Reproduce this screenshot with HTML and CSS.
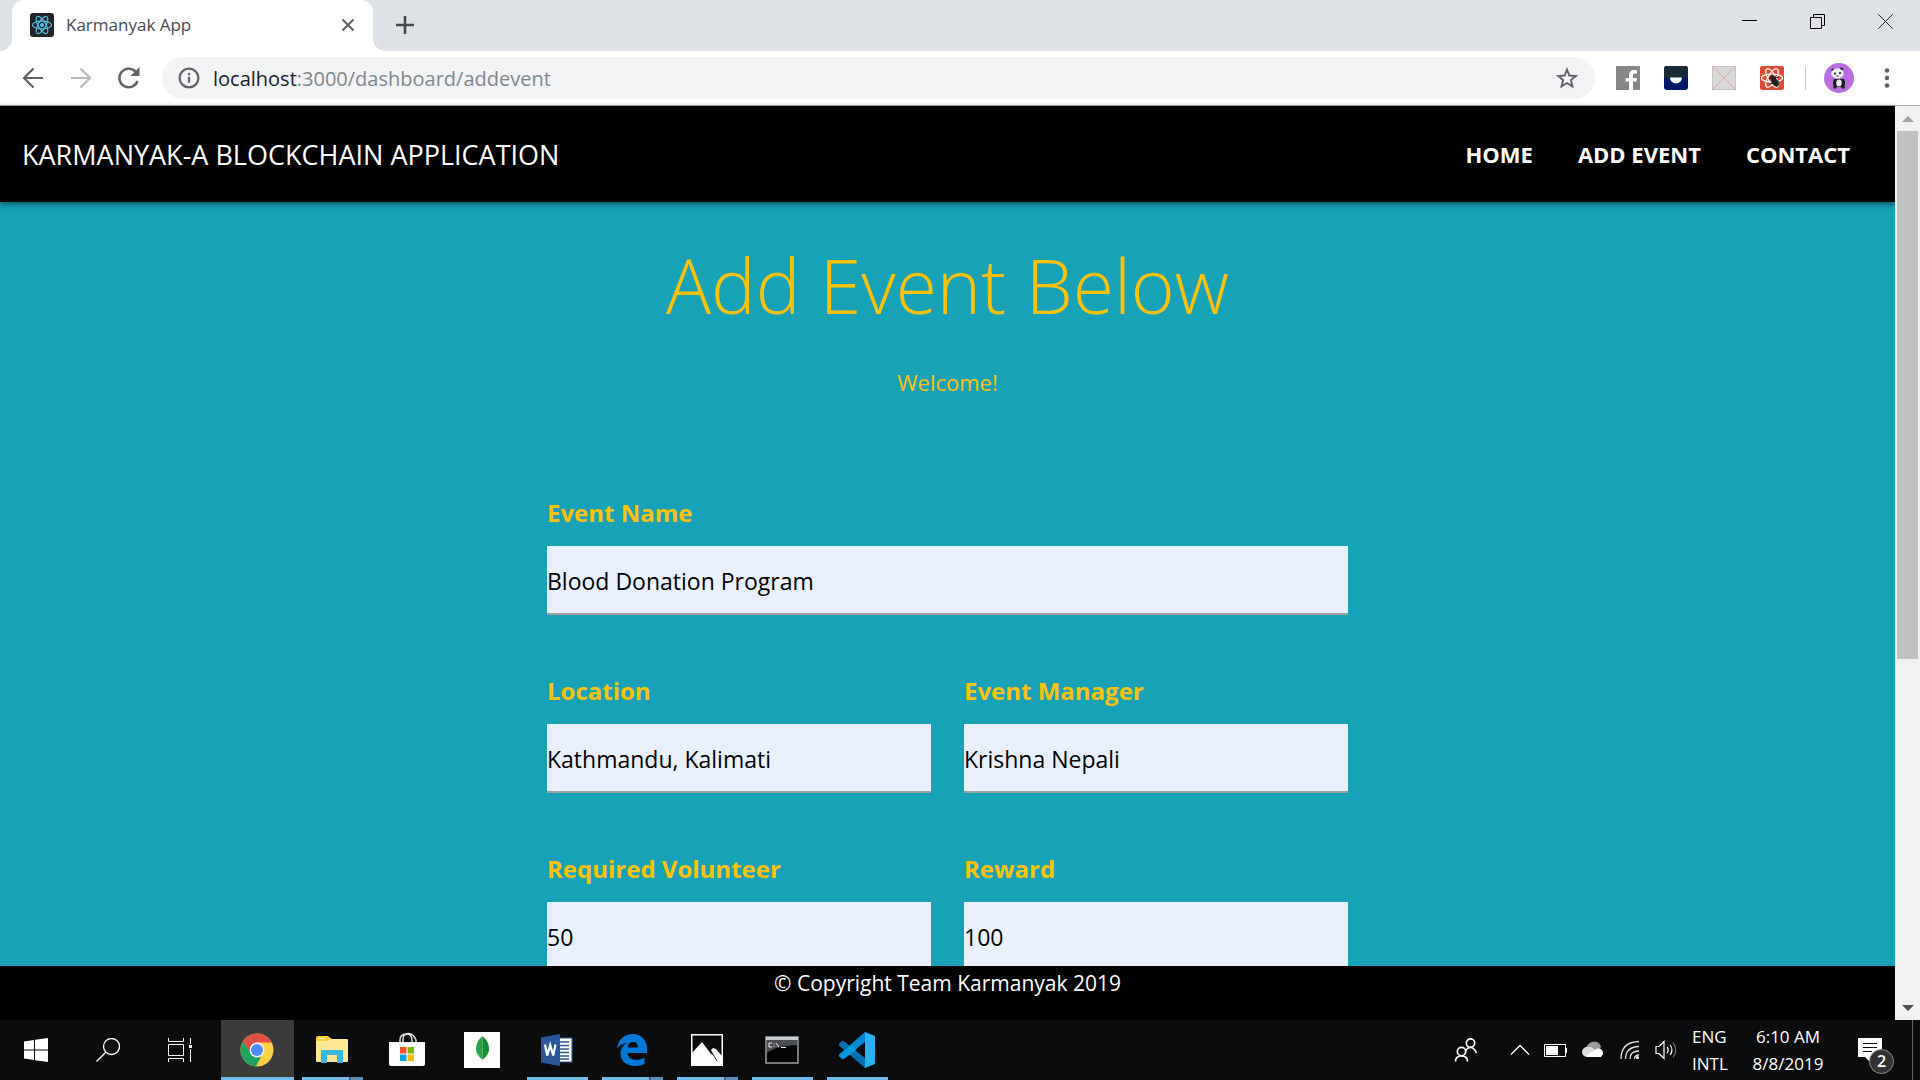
FILE: index.html
```html
<!DOCTYPE html>
<html lang="en">
<head>
<meta charset="utf-8">
<title>Karmanyak App</title>
<link rel="stylesheet" href="styles.css">
</head>
<body>
<div class="desktop">
  <div class="tabstrip">
    <div class="tab">
      <svg class="favicon" width="24" height="24" viewBox="0 0 24 24" fill="none" stroke="#53c1de" stroke-width="1.2"><rect width="24" height="24" rx="3" fill="#20232a" stroke="none"/><g><ellipse cx="12" cy="12" rx="9.6" ry="3.8"/><ellipse cx="12" cy="12" rx="9.6" ry="3.8" transform="rotate(60 12 12)"/><ellipse cx="12" cy="12" rx="9.6" ry="3.8" transform="rotate(120 12 12)"/></g><circle cx="12" cy="12" r="2" fill="#53c1de" stroke="none"/></svg>
      <span class="tab-title">Karmanyak App</span>
      <button class="plain" aria-label="Close tab"><svg width="14" height="14" viewBox="0 0 14 14" stroke="#5f6368" stroke-width="2"><path d="M1.5 1.5l11 11M12.500 1.500l-11 11"/></svg></button>
    </div>
    <button class="plain new-tab" aria-label="New tab"><svg width="18" height="18" viewBox="0 0 18 18" stroke="#45494d" stroke-width="2.600"><path d="M9 0v18M0 9h18"/></svg></button>
    <div class="window-controls">
      <button class="plain" aria-label="Minimize"><svg width="15" height="15" viewBox="0 0 15 15"><path d="M0 6h15v1H0z"/></svg></button>
      <button class="plain" aria-label="Restore"><svg width="15" height="15" viewBox="0 0 15 15" fill="none" stroke="#000"><path d="M.5 3.500h11v11H.5zM3.500 3.500v-3h11v11h-3"/></svg></button>
      <button class="plain" aria-label="Close"><svg width="15" height="15" viewBox="0 0 15 15" fill="none" stroke="#222"><path d="M.3.3l14.400 14.400M14.700.3L.3 14.700"/></svg></button>
    </div>
  </div>

  <div class="toolbar">
    <div class="nav-buttons">
      <button class="plain" aria-label="Back"><svg width="24" height="24" viewBox="0 0 24 24" fill="none" stroke="#5f6368" stroke-width="2.200"><path d="M22 12H4M12.500 2.500L3 12l9.500 9.500"/></svg></button>
      <button class="plain" aria-label="Forward"><svg width="24" height="24" viewBox="0 0 24 24" fill="none" stroke="#bababa" stroke-width="2.200"><path d="M2 12h18M11.500 2.500L21 12l-9.500 9.500"/></svg></button>
      <button class="plain" aria-label="Reload"><svg width="24" height="24" viewBox="0 0 24 24" fill="none" stroke="#5f6368" stroke-width="2.400"><path d="M20.500 15A9.300 9.300 0 1 1 18.500 5.600"/><path d="M22.500 1v9h-9z" fill="#5f6368" stroke="none"/></svg></button>
    </div>
    <div class="omnibox">
      <svg width="22" height="22" viewBox="0 0 22 22" fill="none" stroke="#5f6368" stroke-width="2.200"><circle cx="11" cy="11" r="9.400"/><path d="M11 9.800v6M11 6v2.200"/></svg>
      <span class="url"><b class="host">localhost</b>:3000/dashboard/addevent</span>
      <button class="plain" aria-label="Bookmark"><svg width="22" height="22" viewBox="0 0 22 22" fill="none" stroke="#5f6368" stroke-width="1.900"><path d="M11 2.600l2.400 5.900 6.400.5-4.900 4.100 1.600 6.300-5.500-3.400-5.500 3.400 1.600-6.300L2.200 9l6.400-.5z"/></svg></button>
    </div>
    <div class="extensions">
      <button class="plain" aria-label="Facebook"><svg width="24" height="24" viewBox="0 0 24 24"><path d="M0 0h24v24H0z" fill="#868686"/><path d="M13 24v-8.500h-3.500v-3.600H13V9.500C13 5.900 15.200 4 18.200 4H21v3.500h-2c-1.600 0-2 .8-2 2v2.400h4l-.6 3.600H17V24z" fill="#fff"/></svg></button>
      <button class="plain" aria-label="Reader"><svg width="24" height="24" viewBox="0 0 24 24"><rect width="24" height="24" rx="3" fill="#001a6b"/><path d="M3 0h18a3 3 0 0 1 3 3v9H0V3a3 3 0 0 1 3-3z" fill="#172a38"/><path d="M6 11.500h12a6 6 0 0 1-12 0z" fill="#fff"/></svg></button>
      <button class="plain" aria-label="Disabled extension"><svg width="24" height="24" viewBox="0 0 24 24" fill="none"><path d="M.5.5h23v23H.5z" fill="#d8d8d8" stroke="#c4c4c4"/><path d="M0 0l24 24M24 0L0 24" stroke="#eaa9a5"/></svg></button>
      <button class="plain" aria-label="React tools"><svg width="24" height="24" viewBox="0 0 24 24" fill="none" stroke="#fff" stroke-width="1.200"><rect width="24" height="24" rx="2" fill="#dd4b39" stroke="none"/><ellipse cx="12" cy="12" rx="10.500" ry="4"/><ellipse cx="12" cy="12" rx="10.500" ry="4" transform="rotate(60 12 12)"/><ellipse cx="12" cy="12" rx="10.500" ry="4" transform="rotate(120 12 12)"/><path d="M9 13l10-2M10 18l9-3M12 9l5 12M15 10l2 9" stroke="#222"/><ellipse cx="15" cy="16" rx="3" ry="5" transform="rotate(-40 15 16)" fill="#222" stroke="none"/><circle cx="12" cy="11.500" r="2" fill="#222" stroke="none"/></svg></button>
    </div>
    <span class="divider"></span>
    <button class="plain avatar" aria-label="Profile"><svg width="30" height="30" viewBox="0 0 30 30"><circle cx="15" cy="15" r="15" fill="#b86ee0"/><path d="M10 16q-2 4 0 8h10q2-4 0-8z" fill="#1c1a20"/><ellipse cx="15" cy="20" rx="2.800" ry="3.500" fill="#e8e8ee"/><circle cx="9" cy="7" r="1.600" fill="#222"/><circle cx="17.500" cy="6" r="1.600" fill="#222"/><ellipse cx="13.500" cy="10.500" rx="6.200" ry="5" fill="#efeef2"/><circle cx="11" cy="10.500" r="1.100" fill="#222"/><circle cx="16" cy="10" r="1.100" fill="#222"/><path d="M12.500 13h2" stroke="#222"/><circle cx="11" cy="24" r="1.800" fill="#222"/><circle cx="19" cy="24" r="1.800" fill="#222"/></svg></button>
    <button class="plain" aria-label="Menu"><svg width="6" height="20" viewBox="0 0 6 20" fill="#5f6368"><circle cx="3" cy="2.500" r="2.300"/><circle cx="3" cy="10" r="2.300"/><circle cx="3" cy="17.500" r="2.300"/></svg></button>
  </div>

  <div class="viewport">
    <div class="page">
      <header class="navbar">
        <a class="brand" href="#">KARMANYAK-A BLOCKCHAIN APPLICATION</a>
        <nav class="links"><a href="#">HOME</a><a href="#">ADD EVENT</a><a href="#">CONTACT</a></nav>
      </header>
      <main class="content">
        <h1>Add Event Below</h1>
        <p class="welcome">Welcome!</p>
        <form class="event-form">
          <div class="field wide"><label for="name">Event Name</label><input id="name" type="text" value="Blood Donation Program"></div>
          <div class="field"><label for="location">Location</label><input id="location" type="text" value="Kathmandu, Kalimati"></div>
          <div class="field"><label for="manager">Event Manager</label><input id="manager" type="text" value="Krishna Nepali"></div>
          <div class="field"><label for="volunteer">Required Volunteer</label><input id="volunteer" type="text" value="50"></div>
          <div class="field"><label for="reward">Reward</label><input id="reward" type="text" value="100"></div>
        </form>
      </main>
      <footer class="footer">© Copyright Team Karmanyak 2019</footer>
    </div>
    <div class="scrollbar">
      <svg width="12" height="6" viewBox="0 0 12 6"><path d="M0 6l6-6 6 6z" fill="#a3a3a3"/></svg>
      <div class="track"><div class="thumb"></div></div>
      <svg width="12" height="6" viewBox="0 0 12 6"><path d="M0 0l6 6 6-6z" fill="#505050"/></svg>
    </div>
  </div>

  <div class="taskbar">
    <div class="system">
      <button class="plain" aria-label="Start"><svg width="24" height="24" viewBox="0 0 24 24" fill="#fff"><path d="M0 3.400l10-1.400v9.500H0zM11 1.800L24 0v11.500H11zM0 12.500h10V22L0 20.600zM11 12.500h13V24l-13-1.800z"/></svg></button>
      <button class="plain" aria-label="Search"><svg width="24" height="24" viewBox="0 0 24 24" fill="none" stroke="#fff" stroke-width="1.300"><circle cx="15.500" cy="8.500" r="8"/><path d="M9.800 14.200L.5 23.500"/></svg></button>
      <button class="plain" aria-label="Task view"><svg width="24" height="24" viewBox="0 0 24 24" fill="none" stroke="#fff"><path d="M.5 6.500h15v11H.5zM.5 0v3.500h15V0M.5 24v-3.500h15V24M22.500 0v6M22.500 11v13"/><path d="M21 7h3v3h-3z" fill="#fff" stroke="none"/></svg></button>
    </div>
    <div class="apps">
      <button class="app active running" aria-label="Chrome"><svg width="34" height="34" viewBox="0 0 34 34"><circle cx="17" cy="17" r="16.500" fill="#fdd044"/><path d="M2.800 8.600l7 12.500L17 9.500h14.700a16.500 16.500 0 0 0-28.900-.9z" fill="#dd5144"/><path d="M2.800 8.600A16.500 16.500 0 0 0 16 33.500l5-9.500L9.500 18z" fill="#1da362"/><circle cx="17" cy="17" r="7.500" fill="#f3f3f3"/><circle cx="17" cy="17" r="6" fill="#4c8bf5"/></svg></button>
      <button class="app running multi" aria-label="File Explorer"><svg width="32" height="28" viewBox="0 0 32 28"><path d="M0 3a2 2 0 0 1 2-2h11l3 2h15a1 1 0 0 1 1 1v21a1 1 0 0 1-1 1H1a1 1 0 0 1-1-1z" fill="#ffe694"/><path d="M0 5V2a2 2 0 0 1 2-2h10l3 3-3 2z" fill="#ffcd30"/><path d="M3 2.500h6" stroke="#fff"/><path d="M5 27V15a1 1 0 0 1 1-1h20a1 1 0 0 1 1 1v12h-6v-8H11v8z" fill="#38b6e8"/></svg></button>
      <button class="app" aria-label="Microsoft Store"><svg width="36" height="36" viewBox="0 0 36 36"><path d="M11 10V8q0-6 6-6t6 6v2M14 10V7q0-5 5-5.500t8 6.500v2" fill="none" stroke="#ddd" stroke-width="1.500"/><path d="M0 10h36v22a2 2 0 0 1-2 2H2a2 2 0 0 1-2-2z" fill="#fff"/><path d="M11 15h6.500v6.500H11z" fill="#f25022"/><path d="M18.500 15H25v6.500h-6.500z" fill="#7fba00"/><path d="M11 22.500h6.500V29H11z" fill="#00a4ef"/><path d="M18.500 22.500H25V29h-6.500z" fill="#ffb900"/></svg></button>
      <button class="app" aria-label="MongoDB Compass"><svg width="36" height="36" viewBox="0 0 36 36"><path d="M0 0h36v36H0z" fill="#fff"/><path d="M18.500 4C14 8 12 12 12 17c0 4 3 8 6.500 11z" fill="#2ba243"/><path d="M18.500 4C23 8 25 12 25 17c0 4-3 8-6.500 11z" fill="#118d32"/><path d="M19 27v3" stroke="#ccc"/></svg></button>
      <button class="app running" aria-label="Word"><svg width="32" height="32" viewBox="0 0 32 32"><path d="M17 4h14v24H17z" fill="#fff" stroke="#2b5797"/><path d="M19 8h9M19 11.500h9M19 15h9M19 18.500h9M19 22h9M19 25h9" stroke="#2b5797" stroke-width="1.500"/><path d="M0 3.500L19 0v32L0 28.500z" fill="#2b579a"/><path d="M4 10.500l2.200 11 3-10.500 3 10.500 2.300-11" fill="none" stroke="#fff" stroke-width="2.200"/></svg></button>
      <button class="app running multi" aria-label="Edge"><svg width="32" height="32" viewBox="0 0 32 32"><path d="M1 14.500C2 5.500 8.500 0 16.500 0 26 0 31 7 31 14.500V19H11.500c.3 4.500 4 6.800 9 6.800 3 0 5.500-.8 8-2.300v6.300C26 31.300 23 32 19 32 10 32 4.500 27 4.500 19.500c0-4.500 2.500-8.500 7-10.500C6.500 9 3 11.500 1 14.500zM11.500 13.500H22c0-3.500-1.500-5.500-5-5.500-3 0-5 2-5.500 5.500z" fill="#0078d7"/></svg></button>
      <button class="app running multi" aria-label="Photos"><svg width="32" height="32" viewBox="0 0 32 32"><path d="M.75.75h30.500v30.500H.75z" fill="#0c0c0c" stroke="#fff" stroke-width="1.500"/><path d="M1 19L11 8l9 12 2 1-2-5 2-2 3 1 6 7v9H1z" fill="#fff"/><path d="M20 17l6 10" stroke="#222" fill="none"/></svg></button>
      <button class="app running" aria-label="Command Prompt"><svg width="34" height="28" viewBox="0 0 34 28"><path d="M1 1h32v26H1z" fill="#050505" stroke="#9aa0a6" stroke-width="1.500"/><path d="M2 4h30v5Q10 10 2 17z" fill="#4a4d50"/><path d="M1 1h32v3H1z" fill="#c9cdd0"/><path d="M7 7H4v4h3M9 7.500v1M9 10v1M11 7l3 4M16 11.500h5" stroke="#eee" fill="none"/></svg></button>
      <button class="app running" aria-label="Visual Studio Code"><svg width="36" height="36" viewBox="0 0 36 36"><path d="M26 10L4 27.500 0 24.500v-2L26 0z" fill="#0089ce"/><path d="M26 26L4 8.500 0 11.500v2L26 36z" fill="#0072b4"/><path d="M0 23l12-10 6 4L4 27.500z" fill="#0098de"/><path d="M26 0l10 4v28l-10 4z" fill="#29b1f3"/></svg></button>
    </div>
    <div class="tray">
      <svg class="people" width="24" height="24" viewBox="0 0 24 24" fill="none" stroke="#fff" stroke-width="1.700"><circle cx="16.500" cy="5" r="4.200"/><path d="M12 13q1-3.500 4.500-3.500T22.500 15"/><circle cx="7.500" cy="13.500" r="4.200"/><path d="M1.500 23.500q0-5.500 6-5.500t6 5.500"/></svg>
      <svg width="20" height="20" viewBox="0 0 20 20" fill="none" stroke="#fff" stroke-width="1.300"><path d="M1 14.500l9-9 9 9"/></svg>
      <svg width="24" height="24" viewBox="0 0 24 24" fill="none" stroke="#fff"><path d="M.5 6.500h21v12H.5zM22.500 10v5"/><path d="M2 8h12v9H2z" fill="#fff" stroke="none"/></svg>
      <svg width="24" height="24" viewBox="0 0 24 24"><path d="M4 16a6 6 0 0 1 1-8q2-4 7-4.500 5 0 7 5l-3 7z" fill="#999"/><path d="M5 19a5 5 0 0 1 0-10q3-1 6 1l4 5-4 4z" fill="#ddd"/><path d="M5 19q1-5 6-5 3-5 8-3a5 5 0 0 1 0 8z" fill="#fff"/></svg>
      <svg width="20" height="20" viewBox="0 0 20 20" fill="none" stroke="#ddd" stroke-width="1.300"><path d="M1 19Q1 2 19 1.500M5.500 19q0-12 13.500-12.500M10 19q0-8 9-8M14.500 19q0-4 4.500-4"/><circle cx="17.500" cy="17.500" r="1.500" fill="#fff" stroke="none"/></svg>
      <svg width="24" height="24" viewBox="0 0 24 24" fill="none" stroke="#fff" stroke-width="1.200"><path d="M2 8.500h3l5-5v17l-5-5H2zM13 9q2.500 3 0 6M16 7q4 5 0 10"/><path d="M19 4.500q5.500 7.500 0 15" stroke="#777"/></svg>
      <div class="tray-text language"><span>ENG</span><span>INTL</span></div>
      <div class="tray-text clock"><span>6:10 AM</span><span>8/8/2019</span></div>
      <button class="plain notifications" aria-label="Notifications"><svg width="24" height="24" viewBox="0 0 24 24"><path d="M0 0h24v19H12v5l-5-5H0z" fill="#fff"/><path d="M5 5.500h14M5 9.500h14M5 13.500h9" stroke="#111"/></svg><span class="badge">2</span></button>
    </div>
  </div>
</div>
</body>
</html>
```
FILE: styles.css
```css
* { box-sizing: border-box; }
body { margin: 0; font-family: "Open Sans", "Noto Sans", sans-serif; }
a { color: inherit; text-decoration: none; }
svg { display: block; flex: none; }
.plain { display: flex; align-items: center; justify-content: center; padding: 0; border: 0; background: none; font: inherit; }

.desktop { display: flex; flex-direction: column; height: 100vh; overflow: hidden; }

/* Browser chrome */
.tabstrip { display: flex; align-items: stretch; flex: none; height: 51px; padding-left: 12px; background: #dee1e6; }
.tab { position: relative; display: flex; align-items: center; width: 361px; padding: 0 18px 2px; background: #fff; border-radius: 12px 12px 0 0; }
.tab::before, .tab::after { content: ""; position: absolute; bottom: 0; width: 12px; height: 12px; }
.tab::before { left: -12px; background: radial-gradient(circle at 0 0, transparent 12px, #fff 12px); }
.tab::after { right: -12px; background: radial-gradient(circle at 100% 0, transparent 12px, #fff 12px); }
.tab-title { flex: 1; padding-left: 12px; font-size: 17px; color: #45494d; }
.new-tab { width: 64px; padding-bottom: 2px; }
.window-controls { display: flex; align-items: center; height: 42px; margin-left: auto; padding-right: 1px; }
.window-controls button { width: 68px; height: 42px; }

.toolbar { display: flex; align-items: center; flex: none; height: 55px; padding: 0 30px 0 21px; border-bottom: 1px solid #a9abad; background: #fff; }
.nav-buttons { display: flex; gap: 24px; width: 141px; }
.omnibox { display: flex; flex: 1; align-items: center; height: 42px; padding: 0 17px 0 16px; border-radius: 21px; background: #f1f3f4; }
.url { flex: 1; padding-left: 13px; font-size: 20px; color: #80868b; }
.host { font-weight: 400; color: #202124; }
.extensions { display: flex; gap: 24px; padding: 0 21px; }
.divider { width: 1px; height: 24px; background: #c8cacd; }
.avatar { margin: 0 30px 0 18px; }

/* Page */
.viewport { display: flex; flex: 1; min-height: 0; }
.page { display: flex; flex: 1; flex-direction: column; min-width: 0; color: #ffc107; background: #17a2b8; }
.navbar { z-index: 1; display: flex; flex: none; align-items: center; justify-content: space-between; height: 96px; padding: 0 45px 0 22px; color: #fff; background: #000; box-shadow: 0 2px 6px rgba(0, 0, 0, .5); }
.brand { font-size: 27px; }
.links { display: flex; gap: 45px; font-size: 22px; font-weight: 700; }
.content { flex: 1; min-height: 0; overflow: hidden; }
h1 { margin: 36px 0 0; font-size: 75px; font-weight: 300; line-height: 94px; text-align: center; }
.welcome { margin: 32px 0 95px; font-size: 22px; line-height: 36px; text-align: center; }
.event-form { display: grid; grid-template-columns: 1fr 1fr; gap: 58px 33px; width: 801px; max-width: 100%; margin: 0 auto; }
.field { display: flex; flex-direction: column; gap: 16px; min-width: 0; }
.wide { grid-column: 1 / -1; }
.field label { line-height: 35px; font-size: 24px; font-weight: 700; }
.field input { width: 100%; height: 69px; padding: 2px 0 0; border: 0; border-bottom: 2px solid #9e9e9e; border-radius: 0; background: #e8f0fe; color: #000; font: 23px "Open Sans", "Noto Sans", sans-serif; }
.footer { z-index: 1; flex: none; height: 54px; font-size: 21px; line-height: 34px; text-align: center; color: #fff; background: #000; }

.scrollbar { z-index: 2; display: flex; flex: none; flex-direction: column; align-items: center; width: 25px; padding: 10px 2px 9px; background: #f1f1f1; }
.track { flex: 1; width: 21px; margin: 9px 0; }
.thumb { height: 61%; background: #c1c1c1; }

/* Taskbar */
.taskbar { display: flex; flex: none; justify-content: space-between; height: 60px; background: #0a0c0d; color: #fff; }
.system { display: flex; }
.system button { width: 72px; }
.apps { display: flex; flex: 1; padding-left: 4px; }
.app { position: relative; display: flex; align-items: center; justify-content: center; width: 75px; padding: 0 2px 1px 0; border: 0; background: none; }
.active { background: linear-gradient(#3b3b3c, #3b3b3c) center / 73px 100% no-repeat; }
.running::after { content: ""; position: absolute; right: 7px; bottom: 0; left: 7px; height: 3px; background: #76b9ed; }
.active::after { right: 1px; left: 1px; }
.multi::after { background: linear-gradient(90deg, #76b9ed 47px, #3f6687 47px 49px, #5d8fb8 49px); }
.tray { display: flex; align-items: center; gap: 14px; padding-right: 18px; border-right: 1px solid #666; margin-right: 7px; }
.people { margin-right: 18px; }
.tray-text { display: flex; flex-direction: column; align-items: center; font-size: 17px; line-height: 27px; }
.language { align-items: flex-start; width: 40px; }
.clock { width: 84px; }
.notifications { position: relative; width: 36px; margin-left: 14px; justify-content: flex-start; color: #fff; }
.badge { position: absolute; top: 11px; left: 11px; width: 25px; height: 25px; border: 1px solid #8a8a8a; border-radius: 50%; background: #303234; font-size: 16px; font-weight: 600; line-height: 23px; text-align: center; }
```
